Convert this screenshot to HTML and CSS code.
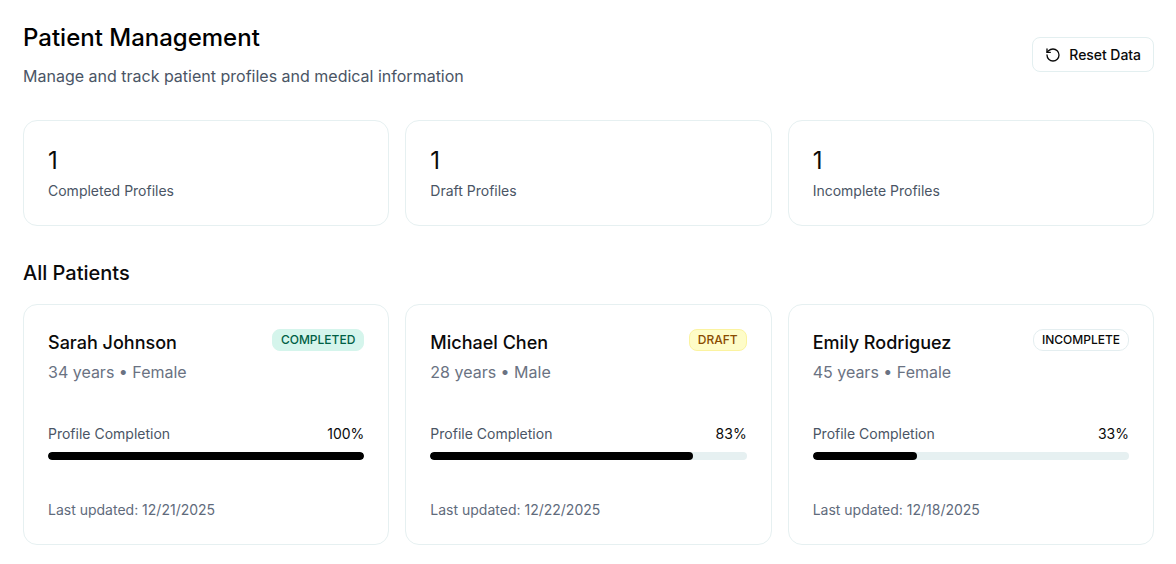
FILE: index.html
```html
<!DOCTYPE html>
<html lang="en">
<head>
<meta charset="utf-8">
<title>Patient Management</title>
<link rel="stylesheet" href="styles.css">
</head>
<body>
<main class="page">
  <header class="header">
    <div>
      <h1 class="title">Patient Management</h1>
      <p class="subtitle">Manage and track patient profiles and medical information</p>
    </div>
    <button class="reset" type="button">
      <svg class="reset-icon" viewBox="0 0 24 24" width="16" height="16" fill="none" stroke="currentColor" stroke-width="2" stroke-linecap="round" stroke-linejoin="round"><path d="M3 12a9 9 0 1 0 9-9 9.75 9.75 0 0 0-6.74 2.74L3 8"/><path d="M3 3v5h5"/></svg>
      Reset Data
    </button>
  </header>
  <section class="grid stats">
    <div class="card stat"><div class="stat-num">1</div><div class="stat-label">Completed Profiles</div></div>
    <div class="card stat"><div class="stat-num">1</div><div class="stat-label">Draft Profiles</div></div>
    <div class="card stat"><div class="stat-num">1</div><div class="stat-label">Incomplete Profiles</div></div>
  </section>
  <h2 class="section-title">All Patients</h2>
  <section class="grid">
    <article class="card patient">
      <div class="patient-top">
        <div class="name">Sarah Johnson</div>
        <span class="badge badge-completed">COMPLETED</span>
      </div>
      <div class="meta">34 years • Female</div>
      <div class="progress-row"><span class="progress-label">Profile Completion</span><span class="progress-value">100%</span></div>
      <div class="track"><div class="fill" style="width:100%"></div></div>
      <div class="updated">Last updated: 12/21/2025</div>
    </article>
    <article class="card patient">
      <div class="patient-top">
        <div class="name">Michael Chen</div>
        <span class="badge badge-draft">DRAFT</span>
      </div>
      <div class="meta">28 years • Male</div>
      <div class="progress-row"><span class="progress-label">Profile Completion</span><span class="progress-value">83%</span></div>
      <div class="track"><div class="fill" style="width:83%"></div></div>
      <div class="updated">Last updated: 12/22/2025</div>
    </article>
    <article class="card patient">
      <div class="patient-top">
        <div class="name">Emily Rodriguez</div>
        <span class="badge badge-incomplete">INCOMPLETE</span>
      </div>
      <div class="meta">45 years • Female</div>
      <div class="progress-row"><span class="progress-label">Profile Completion</span><span class="progress-value">33%</span></div>
      <div class="track"><div class="fill" style="width:33%"></div></div>
      <div class="updated">Last updated: 12/18/2025</div>
    </article>
  </section>
</main>
</body>
</html>
```
FILE: styles.css
```css
* { box-sizing: border-box; }
html, body { margin: 0; background: #fff; }
body { font-family: Inter, "Liberation Sans", sans-serif; color: #0a0a0a; overflow: hidden; }
.page { padding: 22px 22px 0 23px; }
.header { display: flex; justify-content: space-between; align-items: flex-start; margin-bottom: 32px; }
.title { margin: 0; font-size: 24px; line-height: 32px; font-weight: 500; color: #000; }
.subtitle { margin: 10px 0 0; font-size: 16px; line-height: 24px; color: #4a5565; }
.reset { display: flex; align-items: center; gap: 8px; height: 35px; padding: 0 12px; margin-top: 15px; background: #fff; border: 1px solid #e3eff0; border-radius: 8px; font: 500 14px/20px Inter, sans-serif; letter-spacing: -0.05px; color: #0a0a0a; }
.reset-icon { flex: none; }
.grid { display: grid; grid-template-columns: repeat(3, 1fr); gap: 16px; }
.card { background: #fff; border: 1px solid #e6f0f1; border-radius: 14px; }
.stat { height: 106px; padding: 24px; }
.stat-num { font-size: 24px; line-height: 32px; color: #0a0a0a; }
.stat-label { margin-top: 4px; font-size: 14px; line-height: 20px; color: #4a5565; }
.section-title { margin: 33px 0 17px; font-size: 20px; line-height: 28px; font-weight: 500; color: #0a0a0a; }
.patient { height: 241px; padding: 24px; display: flex; flex-direction: column; }
.patient-top { display: flex; justify-content: space-between; align-items: flex-start; height: 28px; }
.name { font-size: 18px; line-height: 28px; font-weight: 500; color: #0a0a0a; }
.badge { display: block; padding: 0 8px; height: 22px; border: 1px solid transparent; border-radius: 8px; font-size: 12px; line-height: 20px; font-weight: 500; }
.badge-completed { background: #d5f5ec; border-color: #d5f5ec; color: #006045; }
.badge-draft { background: #fefcc8; border-color: #fbf3a0; color: #894b00; }
.badge-incomplete { background: #fff; border-color: #e4eef0; color: #0a0a0a; border-radius: 10px; }
.meta { margin-top: 3px; font-size: 16px; line-height: 24px; color: #6a7282; }
.progress-row { display: flex; justify-content: space-between; margin-top: 40px; font-size: 14px; line-height: 20px; }
.progress-label { color: #4a5565; }
.progress-value { color: #0a0a0a; }
.track { height: 8px; margin-top: 8px; background: #e6f0f1; border-radius: 999px; overflow: hidden; }
.fill { height: 100%; background: #000; border-radius: 999px; }
.updated { margin-top: 40px; font-size: 14px; line-height: 20px; color: #5f6b7c; }
```
